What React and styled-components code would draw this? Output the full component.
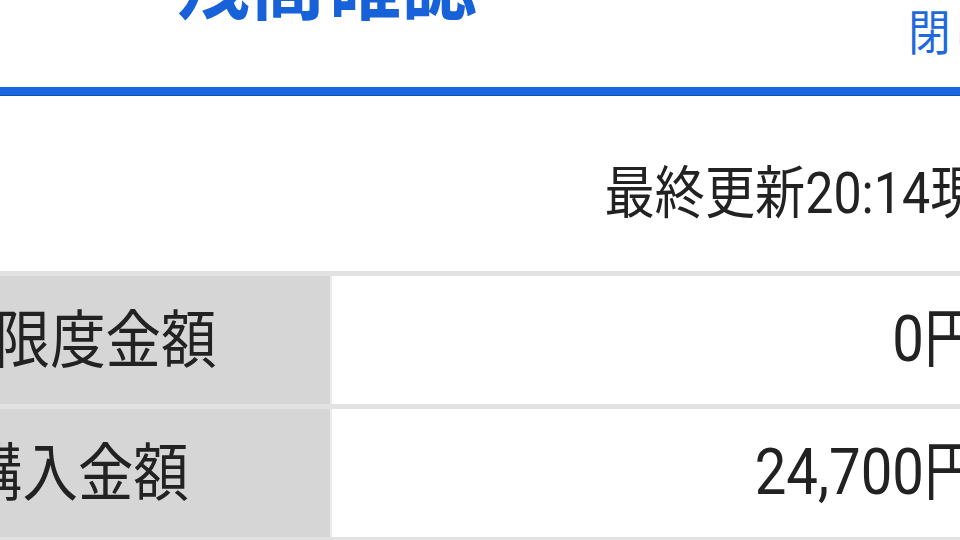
import styled, { createGlobalStyle } from 'styled-components';

const GlobalStyle = createGlobalStyle`
	html, body {
		margin: 0;
		padding: 0;
		background: #ffffff;
		overflow: hidden;
	}

	body {
		font-family: Roboto, "Noto Sans CJK JP", "Noto Sans", sans-serif;
		color: #222222;
	}
`

const rows = [
	{ label: '利用限度金額', value: '0円' },
	{ label: 'ご購入金額', value: '24,700円' },
];

export default function App() {
	return (
		<>
			<GlobalStyle />
			<Page>
				<Header>
					<Title>残高確認</Title>
					<Close>閉じる</Close>
				</Header>

				<Updated>最終更新20:14現在</Updated>

				<Table>
					{rows.map(row => (
						<Row key={row.label}>
							<Label>{row.label}</Label>
							<Value>{row.value}</Value>
						</Row>
					))}
				</Table>
			</Page>
		</>
	);
}

// the capture is squeezed sideways, so the page is drawn at 0.88 width
const Page = styled.div`
	width: 1460px;
	margin-left: -270px;
	transform: scaleX(0.88);
	transform-origin: 270px 0;
`

const Header = styled.header`
	display: flex;
	align-items: flex-start;
	height: 87px;
	padding: 0 14px 0 468px;
	border-bottom: 8px solid #1a66e0;
	box-shadow: 0 1px 0 #0f4fb8;
	box-sizing: content-box;
`

const Title = styled.h1`
	margin: -59px 0 0;
	font-size: 86px;
	line-height: 1;
	font-weight: 700;
	color: #1762d8;
	white-space: nowrap;
`

const Close = styled.a`
	margin: 10px 0 0 auto;
	font-size: 48px;
	line-height: 1;
	color: #2168dc;
	white-space: nowrap;
`

const Updated = styled.p`
	height: 176px;
	margin: 0;
	padding: 70px 19px 0 0;
	box-sizing: border-box;
	text-align: right;
	font-size: 57px;
	line-height: 1;
	white-space: nowrap;
`

const Table = styled.div`
	border-top: 5px solid #e2e2e2;
`

const Row = styled.div`
	display: grid;
	grid-template-columns: 647px 1fr;
	height: 128px;
	border-bottom: 5px solid #e2e2e2;
`

const Label = styled.div`
	display: flex;
	align-items: center;
	justify-content: center;
	padding-left: 9px;
	background: #d6d6d6;
	border-right: 2px solid #ececec;
	font-size: 63px;
	line-height: 1;
	white-space: nowrap;
`

const Value = styled.div`
	display: flex;
	align-items: center;
	justify-content: flex-end;
	padding-right: 76px;
	font-size: 64px;
	line-height: 1;
	white-space: nowrap;
`
